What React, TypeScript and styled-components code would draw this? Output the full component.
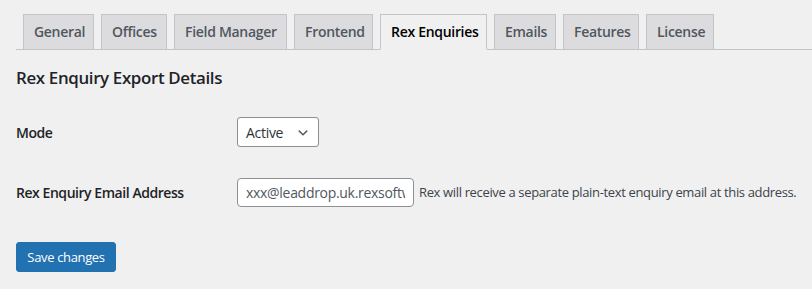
import React from "react";
import styled, { createGlobalStyle } from "styled-components";

const Global = createGlobalStyle`
  html, body { margin: 0; padding: 0; background: #f0f0f1; }
  body { font-family: "Open Sans", "Noto Sans", sans-serif; color: #1d2327; }
  * { box-sizing: border-box; }
`;

const Page = styled.div`
  padding: 14px 0 0 16px;
  width: 812px;
  height: 289px;
  overflow: hidden;
`;

const TabBar = styled.nav`
  display: flex;
  gap: 7px;
  padding-left: 7px;
  border-bottom: 1px solid #c3c4c7;
  height: 36px;
`;

const Tab = styled.div<{ $active?: boolean }>`
  height: 36px;
  padding: 0 10px;
  border: 1px solid #c3c4c7;
  border-bottom-color: ${(p) => (p.$active ? "#f0f0f1" : "#c3c4c7")};
  background: ${(p) => (p.$active ? "#f0f0f1" : "#dcdcde")};
  color: ${(p) => (p.$active ? "#000" : "#50575e")};
  font-size: 14px;
  font-weight: 600;
  letter-spacing: -0.3px;
  line-height: 33px;
  text-align: center;
  white-space: nowrap;
`;

const Title = styled.h2`
  margin: 0;
  padding-top: 16px;
  font-size: 16.9px;
  font-weight: 600;
  letter-spacing: -0.35px;
  line-height: 23px;
  color: #1d2327;
`;

const Row = styled.div<{ $top: number }>`
  display: flex;
  align-items: center;
  margin-top: ${(p) => p.$top}px;
  height: 30px;
`;

const Label = styled.div`
  width: 221px;
  font-size: 14px;
  font-weight: 600;
  letter-spacing: -0.45px;
  color: #1d2327;
`;

const SelectBox = styled.div`
  width: 82px;
  height: 30px;
  border: 1px solid #8c8f94;
  border-radius: 3px;
  background: #fff;
  display: flex;
  align-items: center;
  justify-content: space-between;
  padding: 0 8px 0 8px;
  font-size: 14px;
  color: #2c3338;
  letter-spacing: -0.3px;
`;

const Chevron = styled.svg`
  width: 14px;
  height: 14px;
  margin-top: 1px;
`;

const TextInput = styled.input`
  width: 177px;
  height: 29px;
  border: 1px solid #8c8f94;
  border-radius: 4px;
  background: #fff;
  padding: 0 8px;
  font-family: inherit;
  font-size: 14px;
  line-height: 27px;
  color: #50575e;
  letter-spacing: -0.3px;
  outline: none;
`;

const Description = styled.span`
  margin-left: 5px;
  font-size: 13px;
  color: #3c434a;
  letter-spacing: -0.35px;
  white-space: nowrap;
`;

const Button = styled.button`
  margin-top: 35px;
  height: 30px;
  width: 100px;
  padding: 0 10px;
  background: #2271b1;
  border: 1px solid #2271b1;
  border-radius: 3px;
  color: #fff;
  font-family: inherit;
  font-size: 13px;
  letter-spacing: -0.35px;
  line-height: 28px;
  cursor: pointer;
`;

const tabs = ["General", "Offices", "Field Manager", "Frontend", "Rex Enquiries", "Emails", "Features", "License"];
const widths = [71, 66, 113, 79, 107, 62, 76, 68];

export default function App() {
  return (
    <>
      <Global />
      <Page>
        <TabBar>
          {tabs.map((t, i) => (
            <Tab key={t} $active={t === "Rex Enquiries"} style={{ width: widths[i] }}>
              {t}
            </Tab>
          ))}
        </TabBar>
        <Title>Rex Enquiry Export Details</Title>
        <Row $top={28}>
          <Label>Mode</Label>
          <SelectBox>
            <span>Active</span>
            <Chevron viewBox="0 0 20 20">
              <path d="M5 6l5 5 5-5 2 1-7 7-7-7 2-1z" fill="#50575e" />
            </Chevron>
          </SelectBox>
        </Row>
        <Row $top={30}>
          <Label>Rex Enquiry Email Address</Label>
          <TextInput readOnly value="xxx@leaddrop.uk.rexsoftware.com" />
          <Description>Rex will receive a separate plain-text enquiry email at this address.</Description>
        </Row>
        <Button>Save changes</Button>
      </Page>
    </>
  );
}
